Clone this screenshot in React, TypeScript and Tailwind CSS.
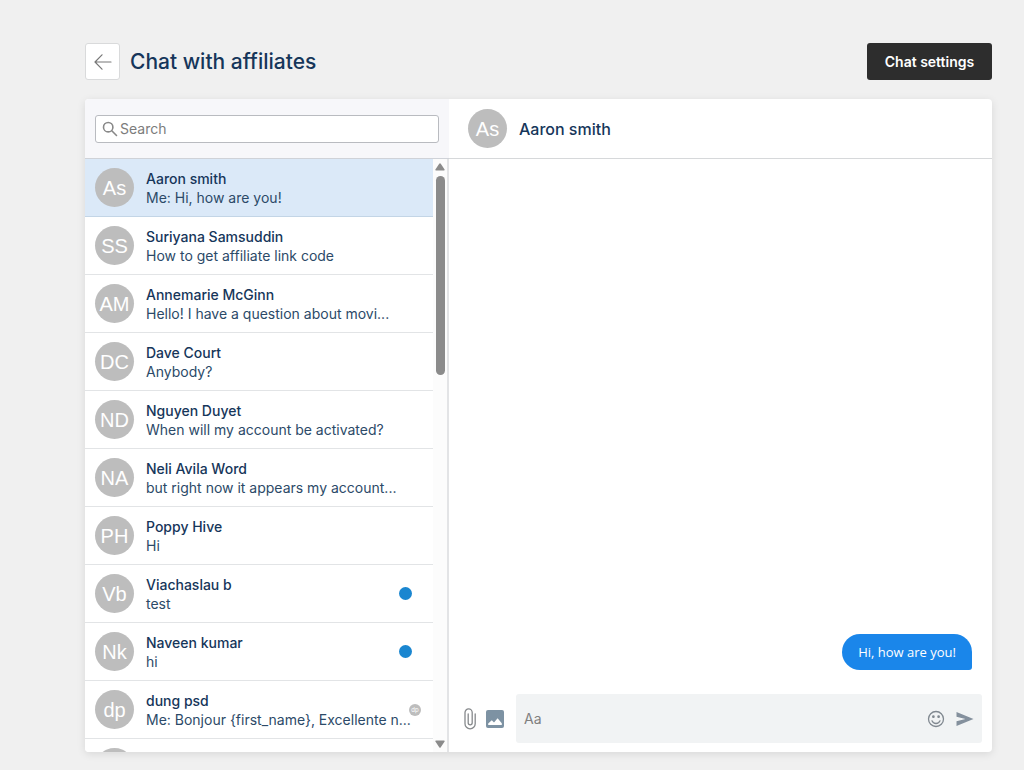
import { useState } from "react";
import clsx from "clsx";

type Chat = {
  initials: string;
  name: string;
  preview: string;
  unread?: boolean;
  seen?: boolean;
};

const chats: Chat[] = [
  { initials: "As", name: "Aaron smith", preview: "Me: Hi, how are you!" },
  { initials: "SS", name: "Suriyana Samsuddin", preview: "How to get affiliate link code" },
  { initials: "AM", name: "Annemarie McGinn", preview: "Hello! I have a question about movi..." },
  { initials: "DC", name: "Dave Court", preview: "Anybody?" },
  { initials: "ND", name: "Nguyen Duyet", preview: "When will my account be activated?" },
  { initials: "NA", name: "Neli Avila Word", preview: "but right now it appears my account..." },
  { initials: "PH", name: "Poppy Hive", preview: "Hi" },
  { initials: "Vb", name: "Viachaslau b", preview: "test", unread: true },
  { initials: "Nk", name: "Naveen kumar", preview: "hi", unread: true },
  { initials: "dp", name: "dung psd", preview: "Me: Bonjour {first_name}, Excellente n...", seen: true },
  { initials: "", name: "", preview: "" },
];

function Avatar({ initials }: { initials: string }) {
  return (
    <span className="flex size-[39px] shrink-0 items-center justify-center rounded-full bg-[#bdbdbd] font-['Liberation_Sans',sans-serif] text-[20px] leading-none text-white">
      {initials}
    </span>
  );
}

function ChatRow({ chat, active, onSelect }: { chat: Chat; active: boolean; onSelect: () => void }) {
  return (
    <li>
      <button
        type="button"
        onClick={onSelect}
        className={clsx(
          "relative flex h-[58px] w-full items-center gap-3 border-b pl-[10px] text-left",
          active ? "border-[#c3d5e6] bg-[#dbe9f8]" : "border-[#e2e4e6] bg-white",
        )}
      >
        <Avatar initials={chat.initials} />
        <span className="min-w-0 text-[14px] leading-[19px] whitespace-nowrap">
          <span className="block font-medium text-[#16365a]">{chat.name}</span>
          <span className="block text-[#2c4a68]">{chat.preview}</span>
        </span>
        {chat.unread && <span className="mr-[21px] ml-auto size-[13px] shrink-0 rounded-full bg-[#1a86d0]" />}
        {chat.seen && (
          <span className="absolute right-3 flex size-3 items-center justify-center rounded-full bg-[#bdbdbd] text-[6px] leading-none text-white">
            dp
          </span>
        )}
      </button>
    </li>
  );
}

// The track sits beside the list so the rows keep their own width.
function ScrollTrack() {
  return (
    <div className="flex w-[14px] shrink-0 flex-col items-center bg-[#fcfcfc] py-1" aria-hidden="true">
      <svg viewBox="0 0 10 8" className="h-2 w-[10px] shrink-0 fill-[#8b8b8b]">
        <path d="M4.2.7a1 1 0 0 1 1.6 0l3.8 5.7c.3.5 0 1.1-.6 1.1H1C.4 7.5.1 6.9.4 6.4z" />
      </svg>
      <div className="mt-[5px] h-[34%] w-[9px] rounded-full bg-[#8b8b8b]" />
      <svg viewBox="0 0 10 8" className="mt-auto h-2 w-[10px] shrink-0 rotate-180 fill-[#8b8b8b]">
        <path d="M4.2.7a1 1 0 0 1 1.6 0l3.8 5.7c.3.5 0 1.1-.6 1.1H1C.4 7.5.1 6.9.4 6.4z" />
      </svg>
    </div>
  );
}

function Composer() {
  return (
    <form className="flex items-center pr-[10px] pb-[9px] pl-[14px]" onSubmit={(e) => e.preventDefault()}>
      <button type="button" aria-label="Attach file">
        <svg viewBox="0 0 14 24" className="h-6 w-[14px] fill-none stroke-[#86898c]" strokeWidth="1.3" strokeLinecap="round">
          <path d="M12.200 7v9.700a5.100 5.100 0 0 1-10.200 0V5.500a3.600 3.600 0 0 1 7.200 0v10.300a2 2 0 0 1-4 0V7" />
        </svg>
      </button>
      <button type="button" aria-label="Send image" className="ml-2">
        <svg viewBox="0 0 20 20" className="size-5">
          <rect x="1" y="1" width="18" height="18" rx="2" fill="#7d92a3" />
          <path d="M3.200 16v-1.400l3.600-3.300 2.200 2.200 3.600-4.300 4.200 5V16z" fill="#fff" />
        </svg>
      </button>
      <div className="ml-[11px] flex h-[49px] flex-1 items-center rounded-[3px] bg-[#f1f3f4] px-2">
        <input
          aria-label="Message"
          placeholder="Aa"
          className="min-w-0 flex-1 bg-transparent text-[14px] outline-none placeholder:text-[#808080]"
        />
        <button type="button" aria-label="Insert emoji">
          <svg viewBox="0 0 18 18" className="size-[18px] fill-none stroke-[#808890]" strokeWidth="1.3" strokeLinecap="round">
            <circle cx="9" cy="9" r="7.5" />
            <path d="M5 10.800a4.300 4.300 0 0 0 8 0" />
            <circle cx="6.4" cy="6.7" r=".7" fill="#808890" />
            <circle cx="11.6" cy="6.7" r=".7" fill="#808890" />
          </svg>
        </button>
        <button type="submit" aria-label="Send" className="ml-[11px]">
          <svg viewBox="0 0 18 16" className="h-4 w-[18px] fill-[#84909d]">
            <path d="M.5 1v4.700l9 2.300-9 2.300V15l17-7z" />
          </svg>
        </button>
      </div>
    </form>
  );
}

export default function App() {
  const [selected, setSelected] = useState(0);
  const current = chats[selected];

  return (
    <main className="flex h-screen flex-col bg-[#f0f0f0] pt-[43px] pr-8 pb-[18px] pl-[85px] font-['Inter',sans-serif] text-[#16365a]">
      <header className="mb-[19px] flex items-center">
        <button
          type="button"
          aria-label="Back"
          className="flex h-[37px] w-[35px] items-center justify-center rounded-[3px] border border-[#d9dadb] bg-white"
        >
          <svg viewBox="0 0 18 16" className="h-4 w-[18px] fill-none stroke-[#777]" strokeWidth="1.2" strokeLinecap="round" strokeLinejoin="round">
            <path d="M17 8H1M8 .8 1 8l7 7.200" />
          </svg>
        </button>
        <h1 className="ml-[10px] text-[21px] leading-7 font-medium">Chat with affiliates</h1>
        <button
          type="button"
          className="ml-auto h-[37px] w-[125px] rounded-[3px] bg-[#2d2d2d] text-[14px] font-semibold text-white"
        >
          Chat settings
        </button>
      </header>

      <div className="flex min-h-0 flex-1 overflow-hidden rounded-[4px] bg-white shadow-[0_2px_8px_rgba(0,0,0,0.1)]">
        <section className="flex w-[364px] shrink-0 flex-col">
          <div className="flex h-[60px] shrink-0 items-center border-b border-[#cfd2d8] bg-[#f7f7fa] px-[10px]">
            <label className="flex h-7 w-full items-center gap-[2px] rounded-[3px] border border-[#b9bbc0] bg-white pl-[6px]">
              <svg viewBox="0 0 16 16" className="size-4 fill-none stroke-[#888]" strokeWidth="1.6" strokeLinecap="round">
                <circle cx="6.2" cy="6.2" r="4.7" />
                <path d="m9.800 9.800 4.700 4.700" />
              </svg>
              <input
                type="search"
                aria-label="Search"
                placeholder="Search"
                className="min-w-0 flex-1 bg-transparent text-[14px] leading-5 outline-none placeholder:text-[#7c7c7c]"
              />
            </label>
          </div>
          <div className="flex min-h-0 flex-1 border-r-2 border-[#e3e4e6]">
            <ul className="min-w-0 flex-1 overflow-y-auto [scrollbar-width:none]">
              {chats.map((chat, i) => (
                <ChatRow key={i} chat={chat} active={i === selected} onSelect={() => setSelected(i)} />
              ))}
            </ul>
            <ScrollTrack />
          </div>
        </section>

        <section className="flex min-w-0 flex-1 flex-col">
          <div className="flex h-[60px] shrink-0 items-center gap-3 border-b border-[#d6d8da] pl-[19px]">
            <Avatar initials={current.initials} />
            <h2 className="text-[16px] leading-6 font-medium">{current.name}</h2>
          </div>
          <div className="flex min-h-0 flex-1 flex-col items-end justify-end overflow-y-auto px-5 pb-6">
            <p className="rounded-[18px] rounded-br-[3px] bg-[#1a86ea] px-4 py-2 font-['Open_Sans',sans-serif] text-[13px] leading-5 font-medium text-white">
              Hi, how are you!
            </p>
          </div>
          <Composer />
        </section>
      </div>
    </main>
  );
}
